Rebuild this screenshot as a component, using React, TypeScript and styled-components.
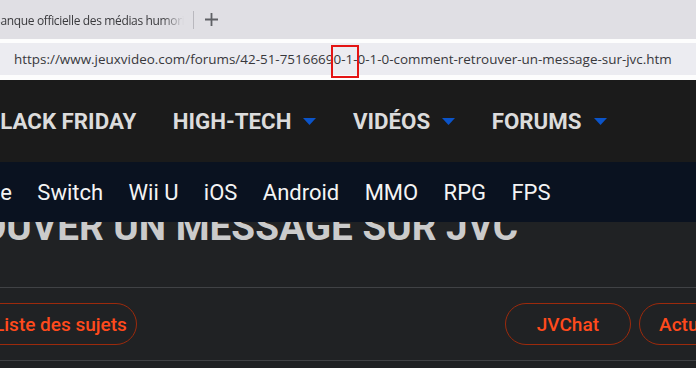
import React from "react";
import styled, { createGlobalStyle } from "styled-components";

const GlobalStyle = createGlobalStyle`
  html, body {
    margin: 0;
    padding: 0;
    width: 696px;
    height: 368px;
    overflow: hidden;
    background-color: #202224;
  }
  * {
    box-sizing: border-box;
  }
`;

const Page = styled.div`
  width: 696px;
  height: 368px;
  overflow: hidden;
  display: flex;
  flex-direction: column;
`;

/* browser chrome */

const TabStrip = styled.div`
  height: 39px;
  flex-shrink: 0;
  background-color: #e0dfe4;
  display: flex;
  align-items: center;
`;

const TabTitle = styled.div`
  width: 184px;
  flex-shrink: 0;
  overflow: hidden;
  white-space: nowrap;
  font-family: "Open Sans", "Noto Sans", sans-serif;
  font-size: 12px;
  letter-spacing: -0.35px;
  color: #3a3a3d;
  padding-top: 2px;
  mask-image: linear-gradient(to right, #000 88%, transparent 100%);
  -webkit-mask-image: linear-gradient(to right, #000 88%, transparent 100%);

  span {
    display: inline-block;
    margin-left: -7px;
  }
`;

const TabDivider = styled.div`
  width: 1px;
  height: 18px;
  margin-left: 9px;
  background-color: #b9b8be;
`;

const NewTab = styled.div`
  margin-left: 11px;
  display: flex;
  align-items: center;
  padding-bottom: 1px;
`;

const Toolbar = styled.div`
  height: 41px;
  flex-shrink: 0;
  background-color: #fdfdfd;
  padding: 4px 0 5px;
`;

const AddressField = styled.div`
  height: 32px;
  background-color: #ececf1;
  display: flex;
  align-items: center;
  padding-left: 14px;
  font-family: "Open Sans", "Noto Sans", sans-serif;
  font-size: 13.45px;
  color: #38383c;
  white-space: nowrap;
`;

const Marked = styled.span`
  position: relative;

  &::after {
    content: "";
    position: absolute;
    left: -10px;
    right: -6px;
    top: -5px;
    bottom: -10px;
    border: 2px solid #e41414;
  }
`;

/* site header */

const MainNav = styled.nav`
  height: 82px;
  flex-shrink: 0;
  background-color: #1b1b1b;
  display: flex;
  align-items: center;
  gap: 36.5px;
  white-space: nowrap;
`;

const NavItem = styled.div<{ $first?: boolean }>`
  display: flex;
  align-items: center;
  gap: 12px;
  margin-left: ${(p) => (p.$first ? "-14px" : "0")};
  font-family: Roboto, "Liberation Sans", sans-serif;
  font-weight: 700;
  font-size: 22.3px;
  color: #dcdcdc;
  text-transform: uppercase;
`;

const Caret = () => (
  <svg width="13" height="7" viewBox="0 0 13 7">
    <polygon points="0,0 13,0 6.5,7" fill="#0b54c9" />
  </svg>
);

const SubNav = styled.nav`
  height: 60px;
  flex-shrink: 0;
  background-color: #0a1220;
  display: flex;
  align-items: center;
  gap: 25.4px;
  white-space: nowrap;
`;

const SubItem = styled.div<{ $first?: boolean }>`
  margin-left: ${(p) => (p.$first ? "-27px" : "0")};
  font-family: Roboto, "Liberation Sans", sans-serif;
  font-size: 22px;
  color: #f4f4f4;
`;

/* page content */

const TitleClip = styled.div`
  height: 66px;
  flex-shrink: 0;
  overflow: hidden;
  border-bottom: 1px solid #404245;
`;

const Title = styled.h1`
  margin: -14px 0 0 -116px;
  font-family: Roboto, "Liberation Sans", sans-serif;
  font-weight: 700;
  font-size: 38.7px;
  line-height: 1;
  color: #cbcbcb;
  white-space: nowrap;
`;

const ActionRow = styled.div`
  height: 73px;
  flex-shrink: 0;
  display: flex;
  align-items: center;
  border-bottom: 1px solid #404245;
  white-space: nowrap;
`;

const RightGroup = styled.div`
  display: flex;
  gap: 8px;
  margin-left: 368px;
`;

const Pill = styled.button<{ $tight?: boolean }>`
  flex-shrink: 0;
  height: 42px;
  min-width: 126px;
  padding: ${(p) => (p.$tight ? "0 9px 0 32px" : "0 18px")};
  margin-left: ${(p) => (p.$tight ? "-39px" : "0")};
  border: 1px solid #9c2a0c;
  border-radius: 21px;
  background: transparent;
  font-family: Roboto, "Liberation Sans", sans-serif;
  font-weight: 500;
  font-size: 19px;
  color: #ff4a1c;
  cursor: pointer;
`;

const App: React.FC = () => {
  return (
    <Page>
      <GlobalStyle />
      <TabStrip>
        <TabTitle>
          <span>Banque officielle des médias humoristiques</span>
        </TabTitle>
        <TabDivider />
        <NewTab>
          <svg width="13" height="13" viewBox="0 0 13 13">
            <path d="M6.5 0v13M0 6.5h13" stroke="#5f6065" strokeWidth="1.8" />
          </svg>
        </NewTab>
      </TabStrip>
      <Toolbar>
        <AddressField>
          https://www.jeuxvideo.com/forums/42-51-75166690<Marked>-1</Marked>
          -0-1-0-comment-retrouver-un-message-sur-jvc.htm
        </AddressField>
      </Toolbar>

      <MainNav>
        <NavItem $first>Black Friday</NavItem>
        <NavItem>
          High-Tech <Caret />
        </NavItem>
        <NavItem>
          Vidéos <Caret />
        </NavItem>
        <NavItem>
          Forums <Caret />
        </NavItem>
      </MainNav>
      <SubNav>
        <SubItem $first>One</SubItem>
        <SubItem>Switch</SubItem>
        <SubItem>Wii U</SubItem>
        <SubItem>iOS</SubItem>
        <SubItem>Android</SubItem>
        <SubItem>MMO</SubItem>
        <SubItem>RPG</SubItem>
        <SubItem>FPS</SubItem>
      </SubNav>

      <TitleClip>
        <Title>RETROUVER UN MESSAGE SUR JVC</Title>
      </TitleClip>
      <ActionRow>
        <Pill $tight>Liste des sujets</Pill>
        <RightGroup>
          <Pill>JVChat</Pill>
          <Pill>Actualités</Pill>
        </RightGroup>
      </ActionRow>
    </Page>
  );
};

export default App;
